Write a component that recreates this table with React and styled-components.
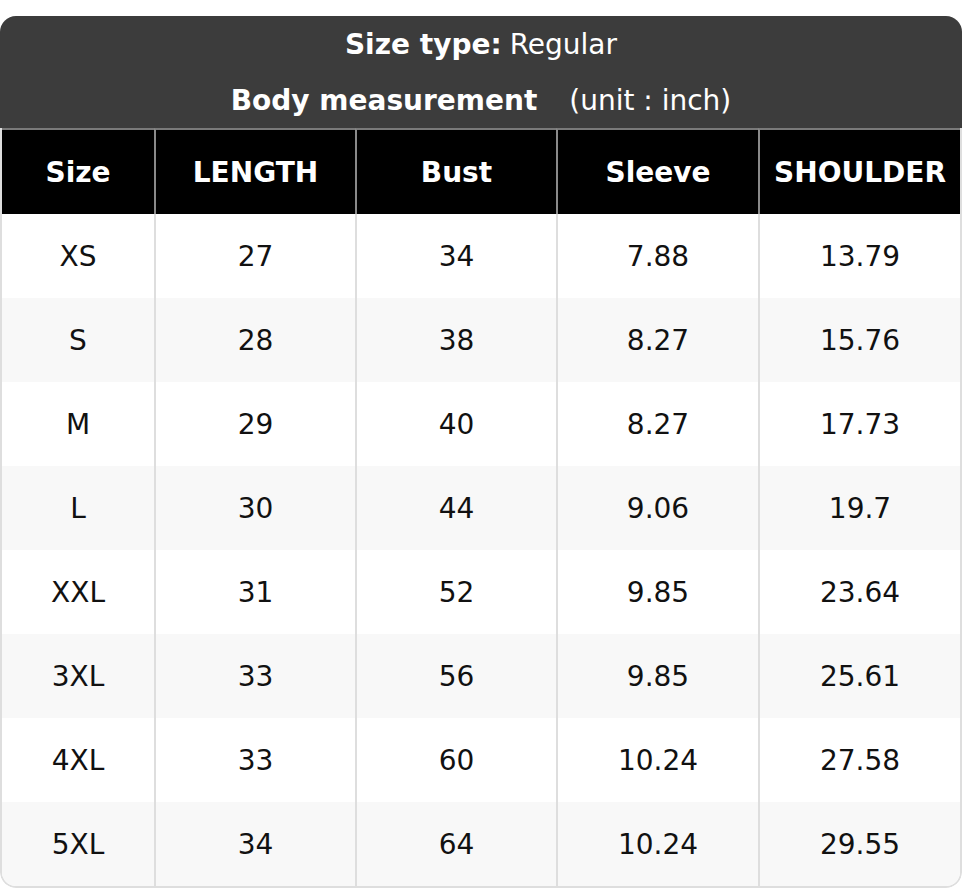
import React from 'react';
import styled, { createGlobalStyle } from 'styled-components';

const GlobalStyle = createGlobalStyle`
    html, body {
        margin: 0;
        padding: 0;
        background: #ffffff;
    }
    body {
        font-family: "DejaVu Sans", "Liberation Sans", sans-serif;
    }
`;

const Page = styled.div`
    padding-top: 16px;
    width: 962px;
`;

const Chart = styled.div`
    border-radius: 16px;
    overflow: hidden;
`;

const Caption = styled.div`
    background-color: #3c3c3c;
    color: #ffffff;
    display: flex;
    flex-direction: column;
`;

const CaptionLine = styled.div`
    height: 56px;
    display: flex;
    align-items: center;
    justify-content: center;
    gap: ${(p) => p.$gap || 8}px;
    font-size: 28px;

    b {
        font-weight: 700;
    }
`;

const Grid = styled.div`
    display: grid;
    grid-template-columns: 152px 201px 201px 202px 1fr;
    border: 2px solid #dedede;
    border-top: none;
    border-radius: 0 0 16px 16px;
    overflow: hidden;
`;

const HeadCell = styled.div`
    height: 84px;
    display: flex;
    align-items: center;
    justify-content: center;
    background: #000000;
    color: #ffffff;
    font-size: 28px;
    font-weight: 700;
    border-top: 2px solid #7a7a7a;
    border-left: ${(p) => (p.$first ? 'none' : '2px solid #8a8a8a')};
`;

const Cell = styled.div`
    height: 84px;
    display: flex;
    align-items: center;
    justify-content: center;
    background: ${(p) => (p.$alt ? '#f8f8f8' : '#ffffff')};
    color: #111111;
    font-size: 28px;
    border-left: ${(p) => (p.$first ? 'none' : '2px solid #dedede')};
`;

const columns = ['Size', 'LENGTH', 'Bust', 'Sleeve', 'SHOULDER'];

const rows = [
    ['XS', '27', '34', '7.88', '13.79'],
    ['S', '28', '38', '8.27', '15.76'],
    ['M', '29', '40', '8.27', '17.73'],
    ['L', '30', '44', '9.06', '19.7'],
    ['XXL', '31', '52', '9.85', '23.64'],
    ['3XL', '33', '56', '9.85', '25.61'],
    ['4XL', '33', '60', '10.24', '27.58'],
    ['5XL', '34', '64', '10.24', '29.55'],
];

const App = () => {
    return (
        <Page>
            <GlobalStyle />
            <Chart>
                <Caption>
                    <CaptionLine $gap={8}>
                        <b>Size type:</b>
                        <span>Regular</span>
                    </CaptionLine>
                    <CaptionLine $gap={32}>
                        <b>Body measurement</b>
                        <span>(unit : inch)</span>
                    </CaptionLine>
                </Caption>
                <Grid>
                    {columns.map((c, i) => (
                        <HeadCell key={c} $first={i === 0}>
                            {c}
                        </HeadCell>
                    ))}
                    {rows.map((r, ri) =>
                        r.map((v, ci) => (
                            <Cell key={`${ri}-${ci}`} $first={ci === 0} $alt={ri % 2 === 1}>
                                {v}
                            </Cell>
                        ))
                    )}
                </Grid>
            </Chart>
        </Page>
    );
};

export default App;
